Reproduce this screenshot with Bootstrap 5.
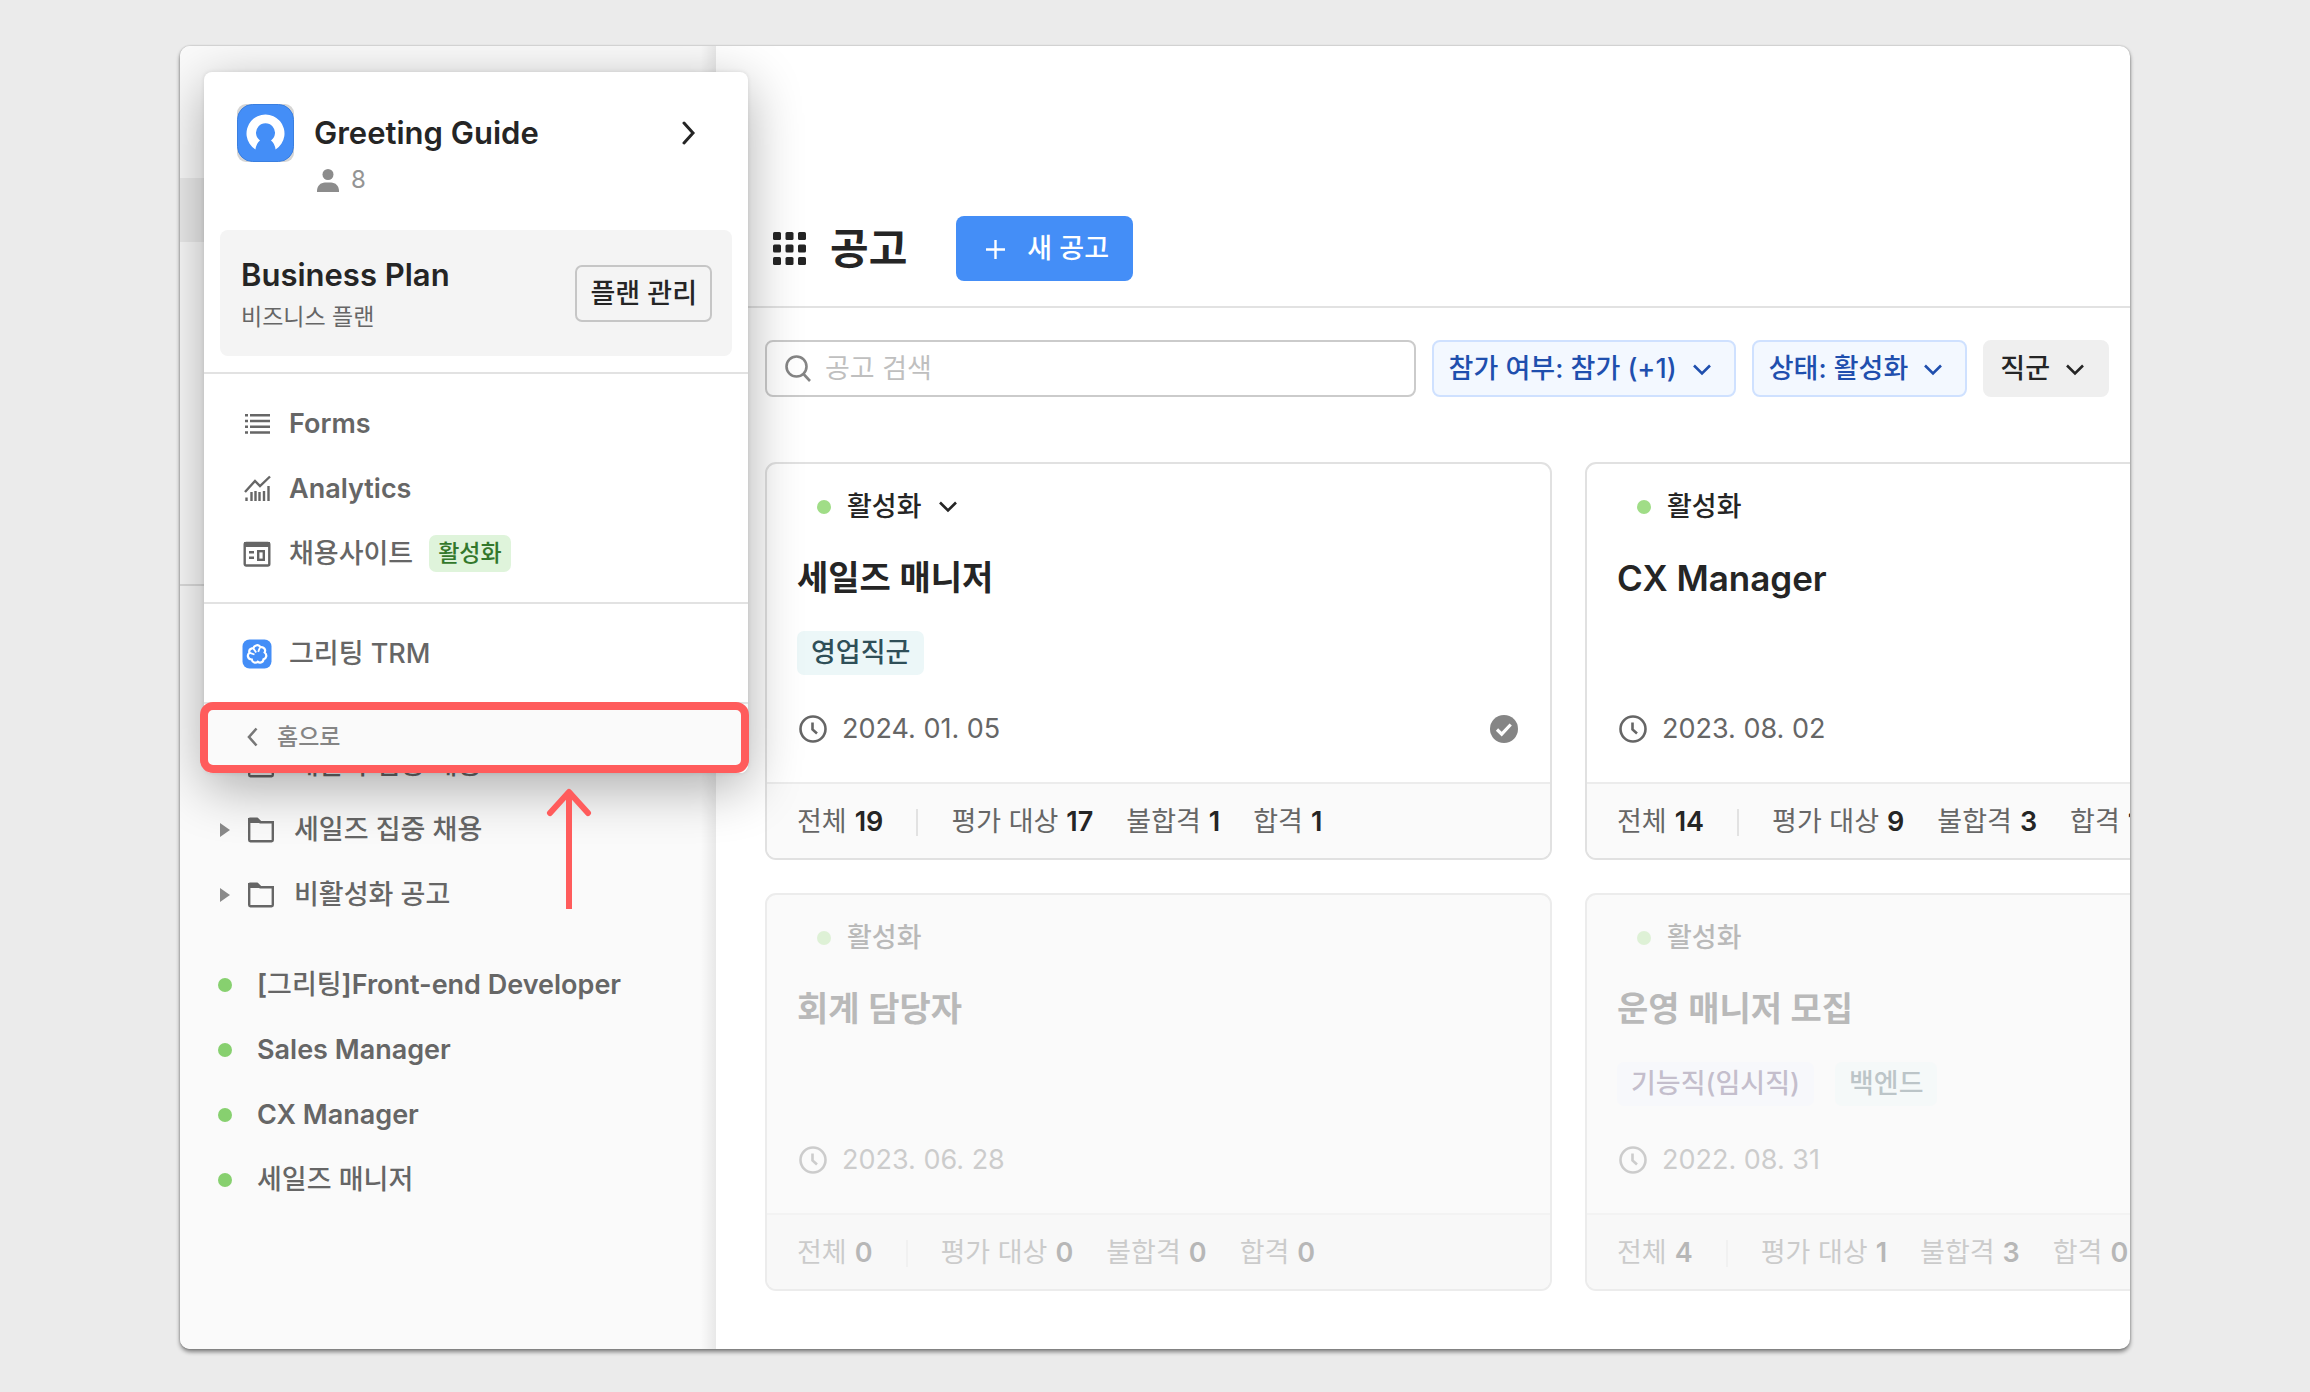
<!DOCTYPE html>
<html lang="ko">
<head>
<meta charset="utf-8">
<meta name="viewport" content="width=device-width, initial-scale=1">
<title>Greeting Guide</title>
<link href="https://cdn.jsdelivr.net/npm/bootstrap@5.3.0/dist/css/bootstrap.min.css" rel="stylesheet">
<style>
  body { background: #ebebeb; font-family: Inter, "Noto Sans CJK KR", sans-serif; font-size: 27px; line-height: 40px; color: #252525; }
  button, input { font-family: inherit; }
  svg { flex: none; display: block; }
  a { color: inherit; text-decoration: none; }
  .btn { font-size: 27px; }
  .ko { font-weight: 500; }
  .ko-sm { font-size: 23px; font-weight: 500; }
  .stage { padding: 46px 180px 43px; }
  .app-frame { min-height: calc(100vh - 89px); background: #fff; border-radius: 10px; box-shadow: 0 3px 4px rgba(0,0,0,.45), 0 0 2px rgba(0,0,0,.3); }
  .app-clip { border-radius: 10px; }

  /* sidebar */
  .side { flex: 0 0 536px; background: linear-gradient(to left, rgba(0,0,0,.07), rgba(0,0,0,0) 15px), #fafafa; padding-top: 132px; color: #666; font-weight: 600; }
  .side-current { height: 64px; background: #ebebeb; }
  .side-rule { margin-top: 342px; height: 2px; background: #dcdcdc; }
  .folders { margin-top: 146px; }
  .side-row { height: 65px; }
  .folders .side-row { padding-left: 40px; }
  .folders .side-row svg + svg { margin: 0 19px 0 17px; }
  .jobs { margin-top: 25px; }
  .jobs .side-row { padding-left: 38px; gap: 25px; }
  .dot { width: 14px; height: 14px; border-radius: 50%; background: #87d06f; flex: none; }

  /* workspace menu */
  .ws-menu { left: 24px; top: 26px; width: 544px; background: #fff; border-radius: 8px; box-shadow: 0 14px 54px rgba(0,0,0,.32), 0 0 4px rgba(0,0,0,.1); color: #666; font-weight: 600; }
  .ws-head { padding: 32px 32px 0 33px; gap: 20px; }
  .ws-name { font-size: 31px; line-height: 58px; font-weight: 600; color: #252525; }
  .ws-count { padding: 1px 0 0 113px; gap: 12px; font-size: 24px; line-height: 34px; font-weight: 400; color: #949494; }
  .plan { margin: 33px 16px 16px; height: 126px; padding: 0 20px 0 21px; background: #f4f4f4; border-radius: 8px; }
  .plan-text { padding-top: 4px; }
  .plan-name { font-size: 31px; line-height: 44px; font-weight: 600; color: #252525; }
  .plan-sub { font-weight: 400; }
  .plan-btn { height: 57px; padding: 2px 13px 0; border: 2px solid #c6c6c6; border-radius: 7px; font-weight: 500; color: #252525; line-height: 40px; }
  .menu-group { border-top: 2px solid #e2e2e2; padding: 17px 0 16px; }
  .menu-row { height: 65px; padding-left: 37px; gap: 16px; }
  .menu-row svg { width: 32px; }
  .live-tag { background: #dff4db; color: #33782c; border-radius: 7px; height: 37px; line-height: 37px; padding: 0 9px; }
  .home-row { height: 71px; background: #fafafa; border-top: 2px solid #e2e2e2; border-radius: 0 0 8px 8px; padding: 0 43px 4px; gap: 19px; color: #858585; }
  .focus-box { left: 20px; top: 656px; width: 549px; height: 71px; border: 8px solid #ff5c5c; border-radius: 13px; }
  .focus-arrow { left: 366px; top: 741px; }

  /* main */
  .main-col { min-width: 0; }
  .main-head { padding: 170px 0 25px 57px; border-bottom: 2px solid #e2e2e2; }
  .main-head h1 { font-size: 42px; line-height: 65px; font-weight: 700; margin: 0 49px 0 24px; }
  .new-btn { height: 65px; padding: 2px 24px 0 30px; gap: 22px; background: #448ef7; color: #fff; border: 0; border-radius: 8px; font-weight: 500; }
  .new-btn:hover { background: #347fe9; color: #fff; }
  .filters { padding: 32px 21px 0 49px; gap: 16px; }
  .search-box { height: 57px; border: 2px solid #cbcbcb; border-radius: 8px; padding: 0 18px; gap: 14px; }
  .search-box input { border: 0; outline: 0; background: transparent; min-width: 0; padding: 0; }
  .search-box input::placeholder { color: #bfbfbf; opacity: 1; font-weight: 400; }
  .chip { height: 57px; border: 2px solid #cfe1ff; background: #f3f8ff; color: #1f4fae; border-radius: 8px; padding: 2px 22px 0 15px; gap: 15px; font-weight: 500; white-space: nowrap; }
  .chip.plain { border-color: #efefef; background: #efefef; color: #252525; }
  .board { display: grid; grid-template-columns: repeat(2, 787px); gap: 33px; padding: 65px 0 0 49px; }
  .job { border: 2px solid #e1e1e1; border-radius: 11px; overflow: hidden; background: #fff; }
  .job-body { padding: 23px 32px 32px 30px; }
  .job-status { padding-left: 20px; gap: 16px; font-weight: 500; }
  .job-status .dot { background: #a0dd87; }
  .job h2 { font-size: 35px; line-height: 52px; font-weight: 600; margin: 25px 0 27px; }
  .job h2.ko-title { font-size: 34px; }
  .job-tags { min-height: 44px; gap: 21px; }
  .tag { height: 44px; line-height: 44px; padding: 0 14px; border-radius: 7px; background: #ecf7f8; color: #2f4f58; font-weight: 500; }
  .tag.violet { background: #f1f4ff; color: #493766; }
  .job-date { margin-top: 33px; height: 42px; color: #666; gap: 15px; padding-left: 2px; }
  .job-foot { border-top: 2px solid #ececec; background: #fafafa; height: 76px; padding: 2px 0 0 30px; color: #666; white-space: nowrap; gap: 33px; }
  .job-foot b { font-weight: 600; color: #252525; margin-left: 8px; }
  .job-foot i { width: 2px; height: 27px; background: #e2e2e2; }
  .job.off { border-color: #ececec; background: #fafafa; }
  .off .job-body > *, .off .job-foot > * { opacity: .3; }
  .off .job-foot { border-color: #f3f3f3; background: #f8f8f8; }
</style>
</head>
<body>
<svg width="0" height="0" class="position-absolute" aria-hidden="true">
  <symbol id="folder" viewBox="0 0 28 28"><path d="M2.200 24V3.200h8l3 3H25.800V24a1.200 1.200 0 0 1-1.200 1.200H3.400A1.200 1.200 0 0 1 2.200 24z" fill="none" stroke="currentColor" stroke-width="2.400"/><path d="M1 7V3.500A2 2 0 0 1 3 1.600h7.500l4 4V7z" fill="currentColor"/></symbol>
  <symbol id="caret" viewBox="0 0 10 14"><path d="M0 0l10 7-10 7z" fill="#8a8a8a"/></symbol>
  <symbol id="down" viewBox="0 0 20 14"><path d="M2 2.500l8 8 8-8" fill="none" stroke="currentColor" stroke-width="2.600"/></symbol>
  <symbol id="clock" viewBox="0 0 28 28"><circle cx="14" cy="14" r="12.500" fill="none" stroke="currentColor" stroke-width="2.600"/><path d="M13.500 7.500V14.500l4.500 4" fill="none" stroke="currentColor" stroke-width="2.600"/></symbol>
</svg>

<div class="stage">
<div class="app-frame d-flex">
<div class="app-clip position-relative d-flex flex-fill overflow-hidden">

  <aside class="side">
    <div class="side-current"></div>
    <div class="side-rule"></div>
    <ul class="folders list-unstyled mb-0 ko">
      <li><a href="#" class="side-row d-flex align-items-center"><svg width="10" height="14"><use href="#caret"/></svg><svg width="28" height="28"><use href="#folder"/></svg>개발자 집중 채용</a></li>
      <li><a href="#" class="side-row d-flex align-items-center"><svg width="10" height="14"><use href="#caret"/></svg><svg width="28" height="28"><use href="#folder"/></svg>세일즈 집중 채용</a></li>
      <li><a href="#" class="side-row d-flex align-items-center"><svg width="10" height="14"><use href="#caret"/></svg><svg width="28" height="28"><use href="#folder"/></svg>비활성화 공고</a></li>
    </ul>
    <ul class="jobs list-unstyled mb-0">
      <li><a href="#" class="side-row d-flex align-items-center"><span class="dot"></span><span>[<span class="ko">그리팅</span>]Front-end Developer</span></a></li>
      <li><a href="#" class="side-row d-flex align-items-center"><span class="dot"></span>Sales Manager</a></li>
      <li><a href="#" class="side-row d-flex align-items-center"><span class="dot"></span>CX Manager</a></li>
      <li><a href="#" class="side-row d-flex align-items-center"><span class="dot"></span><span class="ko">세일즈 매니저</span></a></li>
    </ul>
  </aside>

  <main class="main-col flex-fill">
    <header class="main-head d-flex align-items-center">
      <svg width="33" height="33" viewBox="0 0 33 33" fill="#252525"><g id="dots"><rect width="8" height="8" rx="1.500"/><rect x="12.500" width="8" height="8" rx="1.500"/><rect x="25" width="8" height="8" rx="1.500"/></g><use href="#dots" y="12.500"/><use href="#dots" y="25"/></svg>
      <h1>공고</h1>
      <button type="button" class="btn new-btn d-flex align-items-center"><svg width="19" height="19" viewBox="0 0 19 19"><path d="M9.500 0v19M0 9.500h19" stroke="#fff" stroke-width="2.400"/></svg>새 공고</button>
    </header>

    <div class="filters d-flex">
      <label class="search-box d-flex align-items-center flex-fill" for="job-search">
        <svg width="26" height="27" viewBox="0 0 26 27" fill="none" stroke="#858585" stroke-width="2.600"><circle cx="11.500" cy="11.500" r="10"/><path d="M18.500 19l6.500 7"/></svg>
        <input id="job-search" class="flex-fill" type="search" placeholder="공고 검색" aria-label="공고 검색">
      </label>
      <button type="button" class="btn chip d-flex align-items-center">참가 여부: 참가 (+1)<svg width="20" height="14"><use href="#down"/></svg></button>
      <button type="button" class="btn chip d-flex align-items-center">상태: 활성화<svg width="20" height="14"><use href="#down"/></svg></button>
      <button type="button" class="btn chip plain d-flex align-items-center">직군<svg width="20" height="14"><use href="#down"/></svg></button>
    </div>

    <section class="board">
      <article class="job">
        <div class="job-body">
          <div class="job-status d-flex align-items-center"><span class="dot"></span>활성화<svg width="20" height="14"><use href="#down"/></svg></div>
          <h2 class="ko-title">세일즈 매니저</h2>
          <div class="job-tags d-flex"><span class="tag">영업직군</span></div>
          <div class="job-date d-flex align-items-center"><svg width="28" height="28"><use href="#clock"/></svg>2024. 01. 05
            <svg class="ms-auto" width="28" height="28" viewBox="0 0 28 28"><circle cx="14" cy="14" r="14" fill="#858585"/><path d="M7 14.500l4.700 4.700 9-9.700" fill="none" stroke="#fff" stroke-width="3.200"/></svg></div>
        </div>
        <div class="job-foot d-flex align-items-center"><span>전체<b>19</b></span><i></i><span>평가 대상<b>17</b></span><span>불합격<b>1</b></span><span>합격<b>1</b></span></div>
      </article>

      <article class="job">
        <div class="job-body">
          <div class="job-status d-flex align-items-center"><span class="dot"></span>활성화</div>
          <h2>CX Manager</h2>
          <div class="job-tags d-flex"></div>
          <div class="job-date d-flex align-items-center"><svg width="28" height="28"><use href="#clock"/></svg>2023. 08. 02</div>
        </div>
        <div class="job-foot d-flex align-items-center"><span>전체<b>14</b></span><i></i><span>평가 대상<b>9</b></span><span>불합격<b>3</b></span><span>합격<b>1</b></span></div>
      </article>

      <article class="job off">
        <div class="job-body">
          <div class="job-status d-flex align-items-center"><span class="dot"></span>활성화</div>
          <h2 class="ko-title">회계 담당자</h2>
          <div class="job-tags d-flex"></div>
          <div class="job-date d-flex align-items-center"><svg width="28" height="28"><use href="#clock"/></svg>2023. 06. 28</div>
        </div>
        <div class="job-foot d-flex align-items-center"><span>전체<b>0</b></span><i></i><span>평가 대상<b>0</b></span><span>불합격<b>0</b></span><span>합격<b>0</b></span></div>
      </article>

      <article class="job off">
        <div class="job-body">
          <div class="job-status d-flex align-items-center"><span class="dot"></span>활성화</div>
          <h2 class="ko-title">운영 매니저 모집</h2>
          <div class="job-tags d-flex"><span class="tag violet">기능직(임시직)</span><span class="tag">백엔드</span></div>
          <div class="job-date d-flex align-items-center"><svg width="28" height="28"><use href="#clock"/></svg>2022. 08. 31</div>
        </div>
        <div class="job-foot d-flex align-items-center"><span>전체<b>4</b></span><i></i><span>평가 대상<b>1</b></span><span>불합격<b>3</b></span><span>합격<b>0</b></span></div>
      </article>
    </section>
  </main>

  <nav class="ws-menu position-absolute" aria-label="워크스페이스">
    <a href="#" class="ws-head d-flex align-items-center">
      <svg width="57" height="58" viewBox="0 0 57 58"><rect width="57" height="58" rx="9" fill="#d5d5d5"/><rect x=".5" y=".5" width="56" height="57" rx="15" fill="#448ef7" stroke="#3a7fe0"/><path d="M18.400 45.500A19 19 0 1 1 38.600 45.500Q37.500 39 34 36.500A9.500 9.500 0 1 0 23 36.500Q19.500 39 18.400 45.500z" fill="#fff"/></svg>
      <span class="ws-name">Greeting Guide</span>
      <svg class="ms-auto" width="40" height="24" viewBox="0 0 40 24"><path d="M8 2l9 10-9 10" fill="none" stroke="#252525" stroke-width="3" stroke-linecap="round"/></svg>
    </a>
    <div class="ws-count d-flex align-items-center"><svg width="22" height="23" viewBox="0 0 22 23" fill="#8c8c8c"><circle cx="11" cy="5.500" r="5.500"/><path d="M0 23v-1c0-5 3.500-8.500 8-8.500h6c4.500 0 8 3.500 8 8.500v1z"/></svg>8</div>
    <div class="plan d-flex align-items-center justify-content-between">
      <div class="plan-text"><div class="plan-name">Business Plan</div><div class="ko-sm plan-sub fw-normal">비즈니스 플랜</div></div>
      <button type="button" class="btn plan-btn">플랜 관리</button>
    </div>
    <div class="menu-group">
      <a href="#" class="menu-row d-flex align-items-center"><svg height="28" viewBox="0 0 32 28"><path fill="#666" d="M4 4h3v2.500H4zM4 9.700h3v2.500H4zM4 15.500h3V18H4zM4 21.200h3v2.500H4zM9 4h20v2.500H9zM9 9.700h20v2.500H9zM9 15.500h20V18H9zM9 21.200h20v2.500H9z"/></svg>Forms</a>
      <a href="#" class="menu-row d-flex align-items-center"><svg height="28" viewBox="0 0 32 28"><path d="M4 17l10-11 5 5L29 1.500M5.500 26v-3.500M10.500 26v-9M14.500 26v-10M18.500 26v-9M23 26V16M27.500 26V11" fill="none" stroke="#666" stroke-width="2.400"/></svg>Analytics</a>
      <a href="#" class="menu-row d-flex align-items-center"><svg height="28" viewBox="0 0 32 28"><rect x="3.700" y="3" width="24.600" height="22.500" rx="1.500" fill="none" stroke="#666" stroke-width="2.400"/><path d="M3 2h26v5H3zM8 11h5v2.400H8zM8 16.500h5v2.400H8z" fill="#666"/><rect x="17.200" y="11.200" width="5.600" height="8.600" fill="none" stroke="#666" stroke-width="2.400"/></svg><span class="ko">채용사이트</span><span class="live-tag ko-sm">활성화</span></a>
    </div>
    <div class="menu-group">
      <a href="#" class="menu-row d-flex align-items-center"><svg height="30" viewBox="0 0 32 30"><rect x="1.500" y=".5" width="29" height="29" rx="7" fill="#448ef7"/><path d="M15 6.500c2-.8 3.800 0 4.400 1.800 2.200-.5 4.300.6 4.700 2.700.2 1-.1 1.800-.5 2.500 1.300 1 1.900 2.400 1.600 4-.3 1.500-1.300 2.500-2.700 2.900-.2 1.900-1.500 3.100-3.200 3.200-1 .1-1.900-.3-2.600-.9-.9.900-2.200 1.200-3.500.8-1.500-.5-2.300-1.600-2.400-3-2.200-.1-3.600-1.400-3.900-3.200-.2-1.400.4-2.600 1.500-3.400-.5-2 .5-3.900 2.500-4.500.5-.1.900-.2 1.300-.1.500-1.400 1.400-2.300 2.800-2.800z" fill="none" stroke="#fff" stroke-width="2.200"/><path d="M12.200 9.300l3 4.200M8.800 13.800l4.700 1.700M18.800 8.800l-1.600 4" stroke="#fff" stroke-width="1.800"/></svg><span class="ko">그리팅 TRM</span></a>
    </div>
    <a href="#" class="home-row d-flex align-items-center ko-sm"><svg width="11" height="20" viewBox="0 0 11 20"><path d="M9.500 1.500L2 10l7.500 8.500" fill="none" stroke="#777" stroke-width="2.600"/></svg>홈으로</a>
  </nav>

  <div class="focus-box position-absolute pe-none"></div>
  <svg class="focus-arrow position-absolute" width="46" height="122" viewBox="0 0 46 122" fill="none" stroke="#ff5c5c" stroke-width="6"><path d="M23 6v116"/><path d="M4 26L23 5l19 21" stroke-linecap="round" stroke-linejoin="round"/></svg>
</div>
</div>
</div>
<script src="https://cdn.jsdelivr.net/npm/bootstrap@5.3.0/dist/js/bootstrap.bundle.min.js"></script>
</body>
</html>
